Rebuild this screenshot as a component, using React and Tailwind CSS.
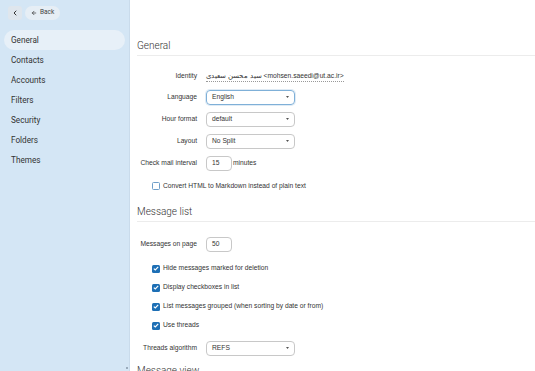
import { ChevronLeft, ArrowLeft } from "lucide-react";

const navItems = ["General", "Contacts", "Accounts", "Filters", "Security", "Folders", "Themes"];

export default function App() {
  return (
    <div className="flex h-[371px] w-[535px] overflow-hidden bg-white text-[#333]">
      <Sidebar />
      <main className="flex-1 pl-[7px] font-['Liberation_Sans',Arial,sans-serif] text-[6.7px]">
        <SectionTitle className="mt-[40px]">General</SectionTitle>

        <Row label="Identity" className="mt-[11px] h-[19px]">
          <span className="border-b border-dotted border-[#999] pb-[1px] leading-[8px]">
            سید محسن سعیدی &lt;mohsen.saeedi@ut.ac.ir&gt;
          </span>
        </Row>
        <Row label="Language">
          <Select value="English" focused />
        </Row>
        <Row label="Hour format">
          <Select value="default" />
        </Row>
        <Row label="Layout">
          <Select value="No Split" />
        </Row>
        <Row label="Check mail interval">
          <NumberBox value="15" />
          <span className="ml-[1px]">minutes</span>
        </Row>
        <CheckRow label="Convert HTML to Markdown instead of plain text" className="h-[24px]" />

        <SectionTitle className="mt-[8px]">Message list</SectionTitle>

        <Row label="Messages on page" className="mt-[11px] h-[22px]">
          <NumberBox value="50" />
        </Row>
        <div className="mt-[4px]">
          <CheckRow checked label="Hide messages marked for deletion" />
          <CheckRow checked label="Display checkboxes in list" />
          <CheckRow checked label="List messages grouped (when sorting by date or from)" />
          <CheckRow checked label="Use threads" />
        </div>
        <Row label="Threads algorithm" className="mt-[2px] h-[22px]">
          <Select value="REFS" />
        </Row>

        <SectionTitle className="mt-[6px]">Message view</SectionTitle>
      </main>
    </div>
  );
}

/* ================= SIDEBAR ================= */

function Sidebar() {
  return (
    <aside className="relative h-full w-[130px] shrink-0 border-r border-[#c9dbeb] bg-[#d4e6f5] font-['Roboto',Arial,sans-serif]">
      <div className="flex h-[30px] items-start gap-[3px] pl-[8px] pt-[6px]">
        <button className="flex h-[14px] w-[14px] items-center justify-center rounded-[3px] bg-[#dfe6ed]">
          <ChevronLeft size={8} strokeWidth={3} className="text-[#333]" />
        </button>
        <button className="flex h-[14px] w-[35px] items-center gap-[2px] rounded-full bg-[#e6eef5] pl-[6px] text-[6.5px] text-[#444]">
          <ArrowLeft size={6} strokeWidth={3} />
          <span className="ml-[1px]">Back</span>
        </button>
      </div>
      <nav className="flex flex-col">
        {navItems.map((item, i) => (
          <div
            key={item}
            className={
              i === 0
                ? "mx-[4px] flex h-[20px] items-center rounded-full bg-[#e7f0f8] pl-[7px] text-[8.2px]"
                : "mx-[4px] flex h-[20px] items-center pl-[7px] text-[8.2px]"
            }
          >
            {item}
          </div>
        ))}
      </nav>
      <div className="absolute bottom-[2px] right-[1px] h-[2px] w-[2px] bg-[#9ab]" />
    </aside>
  );
}

/* ================= FORM PARTS ================= */

function SectionTitle({ children, className = "" }) {
  return (
    <div className={`border-b border-[#ececec] pb-[3px] ${className}`}>
      <h2 className="font-['Roboto',Arial,sans-serif] text-[10px] leading-[12px] font-light text-[#333]">
        {children}
      </h2>
    </div>
  );
}

function Row({ label, children, className = "h-[22px]" }) {
  return (
    <div className={`flex items-center ${className}`}>
      <label className="w-[60px] shrink-0 text-right">{label}</label>
      <div className="ml-[9px] flex items-center">{children}</div>
    </div>
  );
}

function Select({ value, focused }) {
  return (
    <div
      className={
        focused
          ? "flex h-[15px] w-[89px] items-center justify-between rounded-[4px] border border-[#7fb0d8] pl-[5px] pr-[5px] shadow-[0_0_0_1px_rgba(127,176,216,0.25)]"
          : "flex h-[15px] w-[89px] items-center justify-between rounded-[4px] border border-[#c8c8c8] pl-[5px] pr-[5px]"
      }
    >
      <span>{value}</span>
      <svg width="3" height="2" viewBox="0 0 3 2">
        <path d="M0 0h3L1.5 2z" fill="#555" />
      </svg>
    </div>
  );
}

function NumberBox({ value }) {
  return (
    <div className="flex h-[15px] w-[26px] items-center rounded-[4px] border border-[#c8c8c8] pl-[5px]">
      {value}
    </div>
  );
}

function CheckRow({ label, checked, className = "h-[19px]" }) {
  return (
    <div className={`flex items-center pl-[15px] ${className}`}>
      {checked ? (
        <span className="flex h-[8px] w-[8px] items-center justify-center rounded-[1.5px] bg-[#1d6fb5]">
          <svg width="6" height="5" viewBox="0 0 6 5">
            <path d="M0.8 2.6 2.3 4 5.2 0.9" fill="none" stroke="white" strokeWidth="1.2" />
          </svg>
        </span>
      ) : (
        <span className="h-[8px] w-[8px] rounded-[1.5px] border border-[#6f9fc9] bg-white" />
      )}
      <span className="ml-[3px]">{label}</span>
    </div>
  );
}
